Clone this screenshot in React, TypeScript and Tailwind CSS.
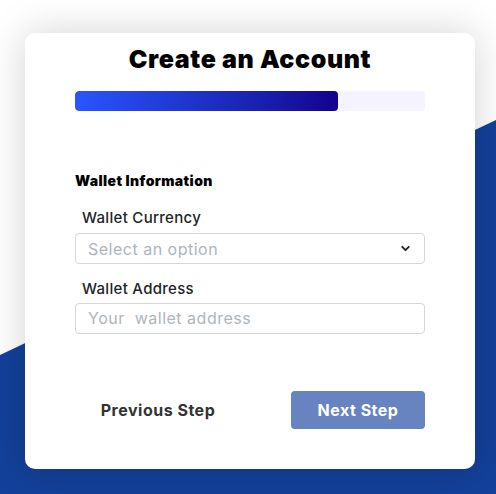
import { ChevronDown } from 'lucide-react';

export default function App() {
  return (
    <main className="relative w-[496px] h-[494px] overflow-hidden bg-white font-['Inter',sans-serif]">
      {/* fondo diagonal azul */}
      <div className="absolute inset-0 bg-[#13409a] [clip-path:polygon(0_355px,100%_120px,100%_100%,0_100%)]" />

      <div className="relative pt-[33px] pl-[25px]">
        <div className="w-[450px] h-[436px] bg-white rounded-[10px] shadow-[0_0_40px_rgba(0,0,0,0.18)] px-[50px] pt-[8px]">
          <h1 className="text-center text-[25px] font-black text-black tracking-[0.6px]">
            Create an Account
          </h1>

          <div className="mt-[12px] h-[20px] w-full rounded-[4px] bg-[#f5f3ff] overflow-hidden">
            <div className="h-full w-[75%] rounded-[4px] bg-gradient-to-r from-[#2a55ff] to-[#14008f]" />
          </div>

          <h2 className="mt-[59px] text-[14px] font-black text-black tracking-[0.4px]">
            Wallet Information
          </h2>

          <label className="block mt-[16px] pl-[7px] text-[15px] font-medium text-[#212529] tracking-[0.3px]">
            Wallet Currency
          </label>
          <div className="mt-[4px] h-[31px] flex items-center justify-between border border-[#d3d7dc] rounded-[4px] pl-[12px] pr-[12px]">
            <span className="text-[16px] text-[#adb5bd] tracking-[0.5px]">Select an option</span>
            <ChevronDown size={13} strokeWidth={3.5} className="text-[#212529]" />
          </div>

          <label className="block mt-[14px] pl-[7px] text-[15px] font-medium text-[#212529] tracking-[0.3px]">
            Wallet Address
          </label>
          <div className="mt-[2px] h-[31px] flex items-center border border-[#d3d7dc] rounded-[4px] pl-[12px]">
            <span className="text-[16px] text-[#adb5bd] tracking-[0.5px] whitespace-pre">Your  wallet address</span>
          </div>

          <div className="mt-[57px] flex items-center justify-between">
            <button className="ml-[16px] w-[134px] h-[38px] text-[16px] font-bold text-[#333333] tracking-[0.5px]">
              Previous Step
            </button>
            <button className="w-[134px] h-[38px] rounded-[4px] bg-[#6783c0] text-[16px] font-bold text-white tracking-[0.5px]">
              Next Step
            </button>
          </div>
        </div>
      </div>
    </main>
  );
}
